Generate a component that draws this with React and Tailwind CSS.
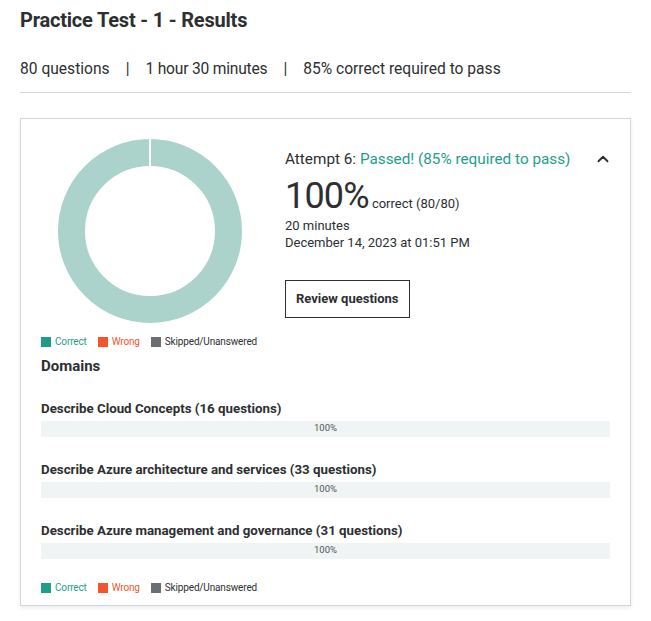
import { ChevronUp } from "lucide-react";

const domains = [
  { name: "Describe Cloud Concepts", count: 16 },
  { name: "Describe Azure architecture and services", count: 33 },
  { name: "Describe Azure management and governance", count: 31 },
];

function Legend() {
  return (
    <div className="flex items-center gap-[11px] text-[10px] leading-[12px] tracking-[-0.15px]">
      <span className="flex items-center gap-[4px] text-[#1e9e89]">
        <span className="w-[10px] h-[10px] bg-[#1e9e89]" />
        Correct
      </span>
      <span className="flex items-center gap-[4px] text-[#f4552c]">
        <span className="w-[10px] h-[10px] bg-[#f4552c]" />
        Wrong
      </span>
      <span className="flex items-center gap-[4px] text-[#2d2f31]">
        <span className="w-[10px] h-[10px] bg-[#6a6f73]" />
        Skipped/Unanswered
      </span>
    </div>
  );
}

function Donut() {
  return (
    <svg width="184" height="184" viewBox="0 0 184 184">
      <circle cx="92" cy="92" r="78.5" fill="none" stroke="#acd2cc" strokeWidth="27" />
      <line x1="92" y1="0" x2="92" y2="28" stroke="#fff" strokeWidth="2" />
    </svg>
  );
}

export default function App() {
  return (
    <div className="min-h-screen bg-white text-[#2d2f31] font-['Roboto','Liberation_Sans',sans-serif] px-5 pt-[8px]">
      <h1 className="text-[20px] leading-[25px] font-bold tracking-[-0.2px]">Practice Test - 1 - Results</h1>
      <div className="mt-[25px] text-[15.6px] leading-[22px] flex items-center gap-[16px]">
        <span>80 questions</span>
        <span>|</span>
        <span className="tracking-[-0.2px]">1 hour 30 minutes</span>
        <span>|</span>
        <span>85% correct required to pass</span>
      </div>
      <div className="mt-[12px] border-t border-[#d1d7dc]" />

      <div className="mt-[25px] border border-[#d1d7dc] shadow-[0_2px_4px_rgba(0,0,0,0.08)] px-5 pt-5 pb-[11px]">
        <div className="flex gap-[26px]">
          <div className="w-[218px] shrink-0 flex flex-col">
            <div className="flex justify-center">
              <Donut />
            </div>
            <div className="mt-[13px]">
              <Legend />
            </div>
          </div>
          <div className="flex-1 pt-[9px]">
            <div className="flex items-center justify-between">
              <div className="text-[15.3px] leading-[22px]">
                Attempt 6: <span className="text-[#1e9e89]">Passed! (85% required to pass)</span>
              </div>
              <ChevronUp className="w-[18px] h-[18px] mr-[-2px] text-[#2d2f31]" strokeWidth={2.5} />
            </div>
            <div className="mt-[6px] flex items-baseline gap-[3px]">
              <span className="text-[36px] leading-[40px] tracking-[-0.8px]">100%</span>
              <span className="text-[13px]">correct (80/80)</span>
            </div>
            <div className="mt-[1px] text-[13px] leading-[17px]">20 minutes</div>
            <div className="text-[13px] leading-[17px]">December 14, 2023 at 01:51 PM</div>
            <button className="mt-[29px] border border-[#2d2f31] h-[38px] px-[10px] text-[13px] font-bold">
              Review questions
            </button>
          </div>
        </div>

        <h2 className="mt-[7px] text-[15px] leading-[22px] font-bold">Domains</h2>

        <div className="mt-[23px] flex flex-col gap-[24.5px]">
          {domains.map((d) => (
            <div key={d.name}>
              <div className="text-[13.3px] leading-[17px] font-bold">
                {d.name} ({d.count} questions)
              </div>
              <div className="mt-[3.5px] h-[16px] bg-[#f1f4f4] flex items-center justify-center text-[9.5px] text-[#4e5458]">
                100%
              </div>
            </div>
          ))}
        </div>

        <div className="mt-[23px]">
          <Legend />
        </div>
      </div>
    </div>
  );
}
